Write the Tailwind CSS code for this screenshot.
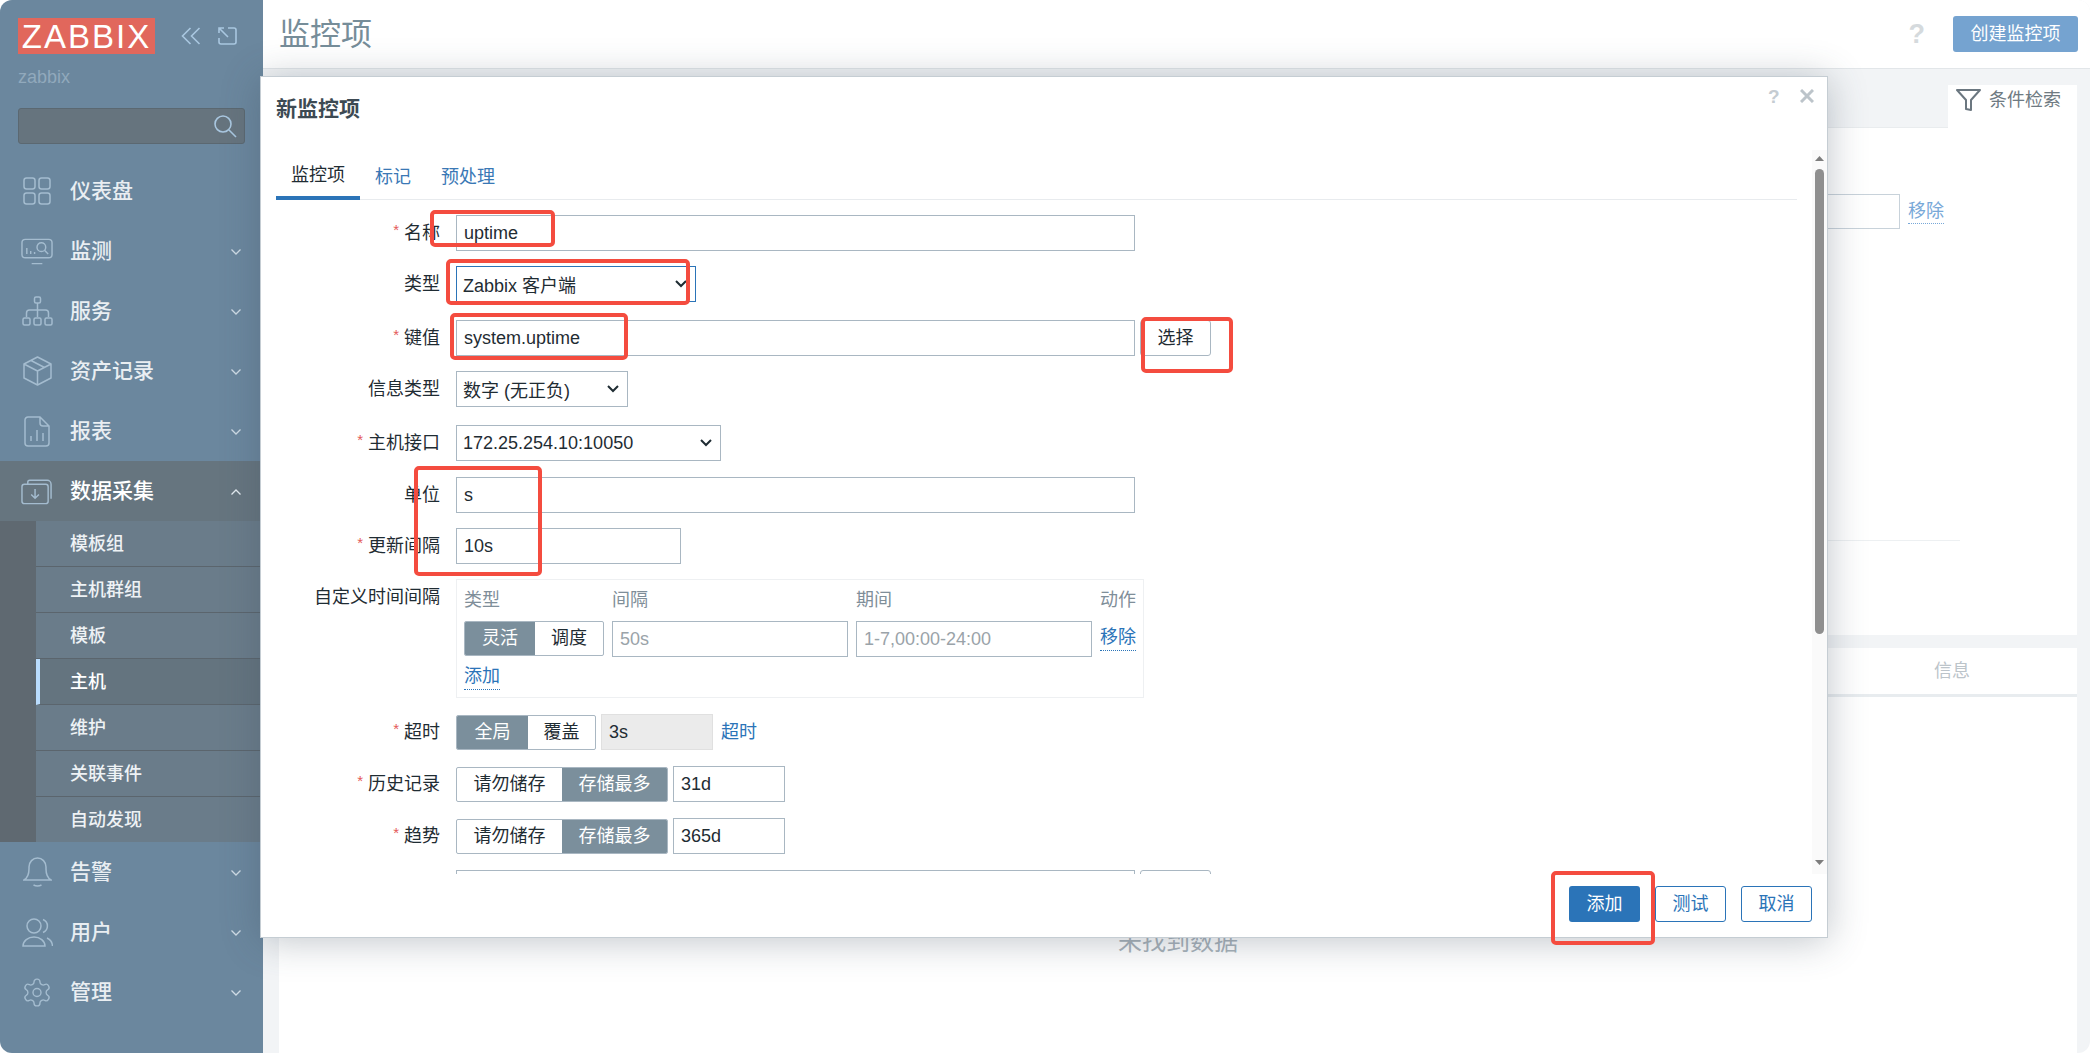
<!DOCTYPE html>
<html lang="zh-CN">
<head>
  <meta charset="UTF-8" />
  <title>监控项</title>
  <script src="https://cdn.jsdelivr.net/npm/@tailwindcss/browser@4"></script>
</head>
<body class="bg-white [font-family:'Liberation_Sans','Noto_Sans_CJK_SC',sans-serif] text-[18px] text-[#1f2c33] overflow-hidden">
<div class="relative flex w-[2090px] h-[1053px] overflow-hidden rounded-[12px] bg-[#f2f4f6]">

  <!-- sidebar -->
  <aside class="w-[263px] h-full shrink-0 bg-[#6b879e] text-[#e9eef2]">
    <div class="flex items-start h-[62px] pl-[18px] pt-[18px]">
      <div class="flex items-center justify-center w-[137px] h-[36px] bg-[#e1675c] text-white text-[33px] leading-none tracking-[2px]">ZABBIX</div>
      <svg class="ml-[26px] mt-[9px]" width="20" height="18" viewBox="0 0 20 18" fill="none" stroke="#a9c7e0" stroke-width="1.6"><path d="M9.5 1 L1.5 9 L9.5 17 M18.5 1 L10.5 9 L18.5 17"/></svg>
      <svg class="ml-[17px] mt-[9px]" width="19" height="18" viewBox="0 0 19 18" fill="none" stroke="#a9c7e0" stroke-width="1.6"><path d="M1 6 V1 H6 M1 1 L10 10 M10 1 H16 a2 2 0 0 1 2 2 V15 a2 2 0 0 1 -2 2 H3 a2 2 0 0 1 -2 -2 V11"/></svg>
    </div>
    <div class="pl-[18px] h-[46px] pt-[5px] text-[#91a9bc] leading-[20px]">zabbix</div>
    <div class="ml-[18px] w-[227px] h-[36px] bg-[#66747e] border border-[#5b6871] rounded-[3px] flex items-center justify-end pr-[7px]">
      <svg width="24" height="24" viewBox="0 0 24 24" fill="none" stroke="#a9c7e0" stroke-width="1.6"><circle cx="10" cy="10" r="8"/><path d="M16 16 L23 23"/></svg>
    </div>
    <nav class="mt-[17px] text-[21px] font-medium">
      <a class="flex items-center h-[60px] pl-[21px]">
        <span class="w-[32px] flex justify-center"><svg width="28" height="28" viewBox="0 0 28 28" fill="none" stroke="#a4bccf" stroke-width="1.5"><rect x="1" y="1" width="11" height="11" rx="2.5"/><rect x="16" y="1" width="11" height="11" rx="2.5"/><rect x="1" y="16" width="11" height="11" rx="2.5"/><rect x="16" y="16" width="11" height="11" rx="2.5"/></svg></span>
        <span class="ml-[17px]">仪表盘</span>
      </a>
      <a class="flex items-center h-[60px] pl-[21px]">
        <span class="w-[32px] flex justify-center"><svg width="33" height="27" viewBox="0 0 33 27" fill="none" stroke="#a4bccf" stroke-width="1.5"><rect x="1" y="1" width="31" height="19" rx="3.5"/><path d="M11 26 H22 M6 16 V10 M10 16 V13 M14 16 V14"/><circle cx="21" cy="9" r="4.5"/><path d="M24.5 12.5 L28 16"/></svg></span>
        <span class="ml-[17px]">监测</span>
        <svg class="ml-auto mr-[22px] mt-[2px]" width="10" height="6" viewBox="0 0 10 6" fill="none" stroke="#cfdbe5" stroke-width="1.3"><path d="M0.5 0.5 L5 5 L9.5 0.5"/></svg>
      </a>
      <a class="flex items-center h-[60px] pl-[21px]">
        <span class="w-[32px] flex justify-center"><svg width="31" height="30" viewBox="0 0 31 30" fill="none" stroke="#a4bccf" stroke-width="1.5"><rect x="12.5" y="1" width="6" height="6" rx="1.5"/><path d="M15.5 7 V21 M4.5 21 V17 Q4.5 14 7.5 14 H23.5 Q26.5 14 26.5 17 V21"/><rect x="1" y="22" width="7" height="7" rx="1.5"/><rect x="12" y="22" width="7" height="7" rx="1.5"/><rect x="23" y="22" width="7" height="7" rx="1.5"/></svg></span>
        <span class="ml-[17px]">服务</span>
        <svg class="ml-auto mr-[22px] mt-[2px]" width="10" height="6" viewBox="0 0 10 6" fill="none" stroke="#cfdbe5" stroke-width="1.3"><path d="M0.5 0.5 L5 5 L9.5 0.5"/></svg>
      </a>
      <a class="flex items-center h-[60px] pl-[21px]">
        <span class="w-[32px] flex justify-center"><svg width="29" height="30" viewBox="0 0 29 30" fill="none" stroke="#a4bccf" stroke-width="1.5" stroke-linejoin="round"><path d="M14.5 1 L28 8 V22 L14.5 29 L1 22 V8 Z M1 8 L14.5 15 L28 8 M14.5 15 V29 M8 4.5 L21.5 11.5"/></svg></span>
        <span class="ml-[17px]">资产记录</span>
        <svg class="ml-auto mr-[22px] mt-[2px]" width="10" height="6" viewBox="0 0 10 6" fill="none" stroke="#cfdbe5" stroke-width="1.3"><path d="M0.5 0.5 L5 5 L9.5 0.5"/></svg>
      </a>
      <a class="flex items-center h-[60px] pl-[21px]">
        <span class="w-[32px] flex justify-center"><svg width="26" height="31" viewBox="0 0 26 31" fill="none" stroke="#a4bccf" stroke-width="1.5"><path d="M4 1 H16 L25 10 V27 a3 3 0 0 1 -3 3 H4 a3 3 0 0 1 -3 -3 V4 a3 3 0 0 1 3 -3 Z M16 1 V7 a3 3 0 0 0 3 3 H25 M7 25 V20 M13 25 V14 M19 25 V17"/></svg></span>
        <span class="ml-[17px]">报表</span>
        <svg class="ml-auto mr-[22px] mt-[2px]" width="10" height="6" viewBox="0 0 10 6" fill="none" stroke="#cfdbe5" stroke-width="1.3"><path d="M0.5 0.5 L5 5 L9.5 0.5"/></svg>
      </a>
      <a class="flex items-center h-[60px] pl-[21px] bg-[#66757f] text-white">
        <span class="w-[32px] flex justify-center"><svg width="33" height="28" viewBox="0 0 33 28" fill="none" stroke="#a4bccf" stroke-width="1.5"><rect x="1" y="7" width="27" height="20" rx="2.5"/><path d="M7 7 V5 a2 2 0 0 1 2 -2 H27 a4 4 0 0 1 4 4 V22 M14.5 12 V21 M10.5 17.5 L14.5 21.5 L18.5 17.5" /></svg></span>
        <span class="ml-[17px]">数据采集</span>
        <svg class="ml-auto mr-[22px] mt-[2px]" width="10" height="6" viewBox="0 0 10 6" fill="none" stroke="#e4ebf1" stroke-width="1.3"><path d="M0.5 5.5 L5 1 L9.5 5.5"/></svg>
      </a>
      <div class="flex bg-[#5f6971] text-[18px] text-[#eef2f5]">
        <div class="w-[36px] shrink-0"></div>
        <ul class="flex-1 bg-[#6a7c8a]">
          <li class="h-[46px] pl-[34px] pt-[2px] flex items-center border-b border-[#5b656d]">模板组</li>
          <li class="h-[46px] pl-[34px] pt-[2px] flex items-center border-b border-[#5b656d]">主机群组</li>
          <li class="h-[46px] pl-[34px] pt-[2px] flex items-center border-b border-[#5b656d]">模板</li>
          <li class="h-[46px] pl-[30px] pt-[2px] flex items-center border-b border-[#5b656d] border-l-[4px] border-l-[#b9dcfd] bg-[#64747f] text-white">主机</li>
          <li class="h-[46px] pl-[34px] pt-[2px] flex items-center border-b border-[#5b656d]">维护</li>
          <li class="h-[46px] pl-[34px] pt-[2px] flex items-center border-b border-[#5b656d]">关联事件</li>
          <li class="h-[45px] pl-[34px] pt-[2px] flex items-center">自动发现</li>
        </ul>
      </div>
      <a class="flex items-center h-[60px] pl-[21px]">
        <span class="w-[32px] flex justify-center"><svg width="29" height="30" viewBox="0 0 29 30" fill="none" stroke="#a4bccf" stroke-width="1.5"><path d="M1 23 Q6 20 6 12 V10 a8.5 9 0 0 1 17 0 V12 Q23 20 28 23 Z M10.5 28 Q14.5 30 18.5 28"/></svg></span>
        <span class="ml-[17px]">告警</span>
        <svg class="ml-auto mr-[22px] mt-[2px]" width="10" height="6" viewBox="0 0 10 6" fill="none" stroke="#cfdbe5" stroke-width="1.3"><path d="M0.5 0.5 L5 5 L9.5 0.5"/></svg>
      </a>
      <a class="flex items-center h-[60px] pl-[21px]">
        <span class="w-[32px] flex justify-center"><svg width="31" height="29" viewBox="0 0 31 29" fill="none" stroke="#a4bccf" stroke-width="1.5"><circle cx="12" cy="8" r="7"/><path d="M1 28 C1 23 6 19 12 19 S23 23 23 28 Z M21 1.5 A7 7 0 0 1 21 14.5 M25 20 Q30 22 30.5 28"/></svg></span>
        <span class="ml-[17px]">用户</span>
        <svg class="ml-auto mr-[22px] mt-[2px]" width="10" height="6" viewBox="0 0 10 6" fill="none" stroke="#cfdbe5" stroke-width="1.3"><path d="M0.5 0.5 L5 5 L9.5 0.5"/></svg>
      </a>
      <a class="flex items-center h-[60px] pl-[21px]">
        <span class="w-[32px] flex justify-center"><svg width="35" height="35" viewBox="0 0 24 24" fill="none" stroke="#a4bccf" stroke-width="1.05"><path d="M12.22 2h-.44a2 2 0 0 0-2 2v.18a2 2 0 0 1-1 1.73l-.43.25a2 2 0 0 1-2 0l-.15-.08a2 2 0 0 0-2.73.73l-.22.38a2 2 0 0 0 .73 2.73l.15.1a2 2 0 0 1 1 1.72v.51a2 2 0 0 1-1 1.74l-.15.09a2 2 0 0 0-.73 2.73l.22.38a2 2 0 0 0 2.73.73l.15-.08a2 2 0 0 1 2 0l.43.25a2 2 0 0 1 1 1.73V20a2 2 0 0 0 2 2h.44a2 2 0 0 0 2-2v-.18a2 2 0 0 1 1-1.73l.43-.25a2 2 0 0 1 2 0l.15.08a2 2 0 0 0 2.73-.73l.22-.39a2 2 0 0 0-.73-2.73l-.15-.08a2 2 0 0 1-1-1.74v-.5a2 2 0 0 1 1-1.74l.15-.09a2 2 0 0 0 .73-2.73l-.22-.38a2 2 0 0 0-2.73-.73l-.15.08a2 2 0 0 1-2 0l-.43-.25a2 2 0 0 1-1-1.73V4a2 2 0 0 0-2-2z"/><circle cx="12" cy="12" r="3"/></svg></span>
        <span class="ml-[17px]">管理</span>
        <svg class="ml-auto mr-[22px] mt-[2px]" width="10" height="6" viewBox="0 0 10 6" fill="none" stroke="#cfdbe5" stroke-width="1.3"><path d="M0.5 0.5 L5 5 L9.5 0.5"/></svg>
      </a>
    </nav>
  </aside>

  <!-- page behind the dialog -->
  <main class="flex-1 min-w-0 flex flex-col">
    <header class="h-[69px] shrink-0 bg-white border-b border-[#e2e6e9] flex items-center pl-[16px] pr-[12px]">
      <h1 class="text-[31px] leading-none text-[#768d99]">监控项</h1>
      <span class="ml-auto text-[27px] font-bold text-[#d5dadd]">?</span>
      <button class="ml-[28px] w-[125px] h-[36px] rounded-[3px] bg-[#75a3d0] text-white">创建监控项</button>
    </header>
    <div class="flex-1 flex flex-col pl-[16px] pr-[13px] pt-[16px]">
      <div class="flex justify-end h-[43px] border-b border-[#e9ecee]">
        <div class="w-[129px] h-[43px] bg-white flex items-center pl-[8px] pb-[12px] text-[#6e7a82]">
          <svg width="25" height="23" viewBox="0 0 25 23" fill="none" stroke="#6b7780" stroke-width="2" stroke-linejoin="round"><path d="M1 1 H24 L15 11 V21 L10 20 V11 Z"/></svg>
          <span class="ml-[8px]">条件检索</span>
        </div>
      </div>
      <section class="h-[507px] bg-white">
        <div class="flex justify-end items-center gap-[8px] mt-[66px] pr-[133px]">
          <div class="w-[200px] h-[35px] border border-[#c8d2da]"></div>
          <a class="text-[#78a8d8] border-b border-dotted border-[#78a8d8] leading-[24px]">移除</a>
        </div>
        <div class="ml-auto mr-[117px] w-[400px] h-px mt-[311px] bg-[#edf0f2]"></div>
      </section>
      <section class="mt-[13px] flex-1 bg-white">
        <div class="h-[49px] border-b-[3px] border-[#e8ecef] flex items-center justify-end pr-[107px] text-[#bcc4ca]">信息</div>
        <p class="mt-[229px] text-center text-[24px] leading-[32px] text-[#a8b2ba]">未找到数据</p>
      </section>
    </div>
  </main>

  <!-- dialog -->
  <div class="absolute left-[260px] top-[76px] w-[1568px] h-[862px] bg-white border border-[#c5cdd3] shadow-[0_3px_36px_rgba(60,75,90,0.32)] flex flex-col">
    <div class="relative h-[73px] shrink-0 pl-[15px] pt-[17px]">
      <h2 class="text-[21px] leading-[30px] font-bold text-[#3d4a53]">新监控项</h2>
      <span class="absolute left-[1507px] top-[6px] text-[19px] font-bold text-[#c5ccd2]">?</span>
      <svg class="absolute left-[1539px] top-[12px]" width="14" height="14" viewBox="0 0 14 14" fill="none" stroke="#bcc4ca" stroke-width="3"><path d="M1 1 L13 13 M13 1 L1 13"/></svg>
    </div>
    <div class="h-[724px] shrink-0 overflow-hidden pl-[15px]">
      <div class="w-[1521px] h-[50px] flex border-b border-[#e8ebee]">
        <a class="px-[15px] pt-[5px] flex items-center h-[50px] border-b-[4px] border-[#2b74b8]">监控项</a>
        <a class="px-[15px] pt-[5px] flex items-center h-[50px] text-[#3a78b5]">标记</a>
        <a class="px-[15px] pt-[5px] flex items-center h-[50px] text-[#3a78b5]">预处理</a>
      </div>

      <div class="flex mt-[15px] h-[36px]">
        <label class="w-[164px] flex items-center justify-end"><span class="text-[#e45959] text-[15px] mr-[5px] -mt-[5px]">*</span>名称</label>
        <input class="ml-[16px] w-[679px] h-[36px] px-[7px] border border-[#a9b7c2] bg-white" value="uptime" />
      </div>
      <div class="flex mt-[15px] h-[36px]">
        <label class="w-[164px] pt-[1px] flex items-center justify-end">类型</label>
        <div class="relative ml-[16px] w-[240px] h-[36px]">
          <select class="appearance-none w-full h-full border border-[#2b74b8] bg-white pl-[6px] pt-[4px]"><option>Zabbix 客户端</option></select>
          <svg class="absolute right-[9px] top-[14px]" width="12" height="8" viewBox="0 0 12 8" fill="none" stroke="#1f2c33" stroke-width="2"><path d="M1 1 L6 6 L11 1"/></svg>
        </div>
      </div>
      <div class="flex mt-[18px] h-[36px]">
        <label class="w-[164px] flex items-center justify-end"><span class="text-[#e45959] text-[15px] mr-[5px] -mt-[5px]">*</span>键值</label>
        <input class="ml-[16px] w-[679px] h-[36px] px-[7px] border border-[#a9b7c2] bg-white" value="system.uptime" />
        <button class="ml-[5px] w-[71px] h-[36px] border border-[#a9b7c2] rounded-[3px] bg-white">选择</button>
      </div>
      <div class="flex mt-[15px] h-[36px]">
        <label class="w-[164px] flex items-center justify-end">信息类型</label>
        <div class="relative ml-[16px] w-[172px] h-[36px]">
          <select class="appearance-none w-full h-full border border-[#a9b7c2] bg-white pl-[6px] pt-[4px]"><option>数字 (无正负)</option></select>
          <svg class="absolute right-[9px] top-[14px]" width="12" height="8" viewBox="0 0 12 8" fill="none" stroke="#1f2c33" stroke-width="2"><path d="M1 1 L6 6 L11 1"/></svg>
        </div>
      </div>
      <div class="flex mt-[18px] h-[36px]">
        <label class="w-[164px] flex items-center justify-end"><span class="text-[#e45959] text-[15px] mr-[5px] -mt-[5px]">*</span>主机接口</label>
        <div class="relative ml-[16px] w-[265px] h-[36px]">
          <select class="appearance-none w-full h-full border border-[#a9b7c2] bg-white pl-[6px]"><option>172.25.254.10:10050</option></select>
          <svg class="absolute right-[9px] top-[14px]" width="12" height="8" viewBox="0 0 12 8" fill="none" stroke="#1f2c33" stroke-width="2"><path d="M1 1 L6 6 L11 1"/></svg>
        </div>
      </div>
      <div class="flex mt-[16px] h-[36px]">
        <label class="w-[164px] flex items-center justify-end">单位</label>
        <input class="ml-[16px] w-[679px] h-[36px] px-[7px] border border-[#a9b7c2] bg-white" value="s" />
      </div>
      <div class="flex mt-[15px] h-[36px]">
        <label class="w-[164px] flex items-center justify-end"><span class="text-[#e45959] text-[15px] mr-[5px] -mt-[5px]">*</span>更新间隔</label>
        <input class="ml-[16px] w-[225px] h-[36px] px-[7px] border border-[#a9b7c2] bg-white" value="10s" />
      </div>

      <div class="flex mt-[15px]">
        <label class="w-[164px] h-[36px] flex items-center justify-end">自定义时间间隔</label>
        <div class="ml-[16px] w-[688px] h-[119px] border border-[#eef0f2] pl-[7px] pr-[7px] whitespace-nowrap">
          <div class="flex h-[41px] items-center text-[#7f8e99]">
            <span class="w-[148px]">类型</span>
            <span class="w-[244px]">间隔</span>
            <span class="w-[244px]">期间</span>
            <span>动作</span>
          </div>
          <div class="flex items-start">
            <div class="flex w-[140px] h-[35px] border border-[#a9b7c2] rounded-[2px] overflow-hidden">
              <span class="w-[70px] bg-[#7b8f9c] text-white flex items-center justify-center">灵活</span>
              <span class="flex-1 flex items-center justify-center">调度</span>
            </div>
            <input class="ml-[8px] w-[236px] h-[36px] px-[7px] border border-[#a9b7c2] bg-white placeholder:text-[#9aa3a9]" placeholder="50s" />
            <input class="ml-[8px] w-[236px] h-[36px] px-[7px] border border-[#a9b7c2] bg-white placeholder:text-[#9aa3a9]" placeholder="1-7,00:00-24:00" />
            <a class="ml-[8px] mt-[4px] leading-[24px] pb-[1px] text-[#2b74b8] border-b border-dotted border-[#2b74b8] shrink-0">移除</a>
          </div>
          <a class="inline-block mt-[7px] leading-[24px] pb-[1px] text-[#2b74b8] border-b border-dotted border-[#2b74b8]">添加</a>
        </div>
      </div>

      <div class="flex mt-[16px] h-[36px] items-center">
        <label class="w-[164px] flex items-center justify-end"><span class="text-[#e45959] text-[15px] mr-[5px] -mt-[5px]">*</span>超时</label>
        <div class="ml-[16px] flex w-[140px] h-[35px] border border-[#a9b7c2] rounded-[2px] overflow-hidden">
          <span class="w-[71px] bg-[#7b8f9c] text-white flex items-center justify-center">全局</span>
          <span class="flex-1 flex items-center justify-center">覆盖</span>
        </div>
        <input class="ml-[5px] w-[112px] h-[36px] px-[7px] border border-[#e0e0e0] bg-[#ebebeb]" value="3s" disabled />
        <a class="ml-[8px] text-[#2b74b8]">超时</a>
      </div>
      <div class="flex mt-[16px] h-[36px] items-center">
        <label class="w-[164px] flex items-center justify-end"><span class="text-[#e45959] text-[15px] mr-[5px] -mt-[5px]">*</span>历史记录</label>
        <div class="ml-[16px] flex w-[212px] h-[35px] border border-[#a9b7c2] rounded-[2px] overflow-hidden">
          <span class="w-[105px] flex items-center justify-center">请勿储存</span>
          <span class="flex-1 bg-[#7b8f9c] text-white flex items-center justify-center">存储最多</span>
        </div>
        <input class="ml-[5px] w-[112px] h-[36px] px-[7px] border border-[#a9b7c2] bg-white" value="31d" />
      </div>
      <div class="flex mt-[16px] h-[36px] items-center">
        <label class="w-[164px] flex items-center justify-end"><span class="text-[#e45959] text-[15px] mr-[5px] -mt-[5px]">*</span>趋势</label>
        <div class="ml-[16px] flex w-[212px] h-[35px] border border-[#a9b7c2] rounded-[2px] overflow-hidden">
          <span class="w-[105px] flex items-center justify-center">请勿储存</span>
          <span class="flex-1 bg-[#7b8f9c] text-white flex items-center justify-center">存储最多</span>
        </div>
        <input class="ml-[5px] w-[112px] h-[36px] px-[7px] border border-[#a9b7c2] bg-white" value="365d" />
      </div>
      <div class="flex mt-[16px] h-[36px]">
        <div class="w-[164px]"></div>
        <input class="ml-[16px] w-[679px] h-[36px] border border-[#a9b7c2] bg-white" />
        <button class="ml-[5px] w-[71px] h-[36px] border border-[#a9b7c2] rounded-[3px] bg-white"></button>
      </div>
    </div>
    <div class="flex-1 flex justify-end gap-[15px] pt-[12px] pr-[15px]">
      <button class="w-[71px] h-[36px] rounded-[3px] bg-[#2b74b8] text-white">添加</button>
      <button class="w-[71px] h-[36px] rounded-[3px] border border-[#2b74b8] bg-white text-[#2b74b8]">测试</button>
      <button class="w-[71px] h-[36px] rounded-[3px] border border-[#2b74b8] bg-white text-[#2b74b8]">取消</button>
    </div>

    <!-- scrollbar -->
    <div class="absolute right-0 top-[73px] w-[15px] h-[724px] bg-[#fafafa]">
      <svg class="absolute left-[3px] top-[6px]" width="9" height="5" viewBox="0 0 9 5" fill="#7d7d7d"><path d="M4.5 0 L9 5 H0 Z"/></svg>
      <div class="absolute left-[3px] top-[19px] w-[9px] h-[465px] rounded-full bg-[#8f8f8f]"></div>
      <svg class="absolute left-[3px] top-[710px]" width="9" height="5" viewBox="0 0 9 5" fill="#7d7d7d"><path d="M0 0 H9 L4.5 5 Z"/></svg>
    </div>
  </div>

  <!-- red annotation boxes -->
  <div class="absolute left-[430px] top-[210px] w-[125px] h-[37px] border-[4px] border-[#f44c3f] rounded-[5px]"></div>
  <div class="absolute left-[446px] top-[259px] w-[244px] h-[46px] border-[4px] border-[#f44c3f] rounded-[5px]"></div>
  <div class="absolute left-[450px] top-[313px] w-[178px] h-[47px] border-[4px] border-[#f44c3f] rounded-[5px]"></div>
  <div class="absolute left-[1141px] top-[317px] w-[92px] h-[56px] border-[4px] border-[#f44c3f] rounded-[5px]"></div>
  <div class="absolute left-[414px] top-[466px] w-[128px] h-[110px] border-[4px] border-[#f44c3f] rounded-[5px]"></div>
  <div class="absolute left-[1551px] top-[871px] w-[104px] h-[74px] border-[4px] border-[#f44c3f] rounded-[5px]"></div>
</div>
</body>
</html>
